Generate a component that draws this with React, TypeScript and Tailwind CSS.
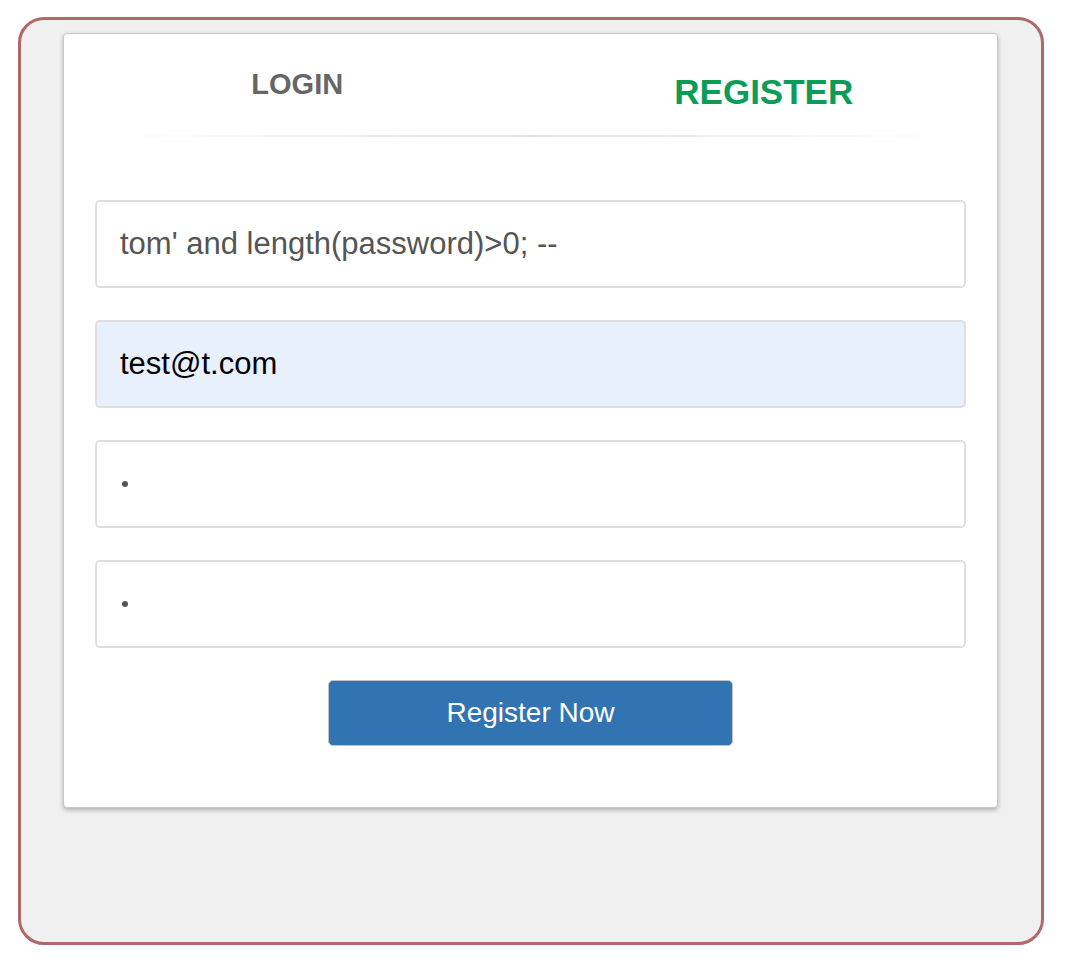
const font = { fontFamily: '"Liberation Sans", Arial, sans-serif' };

function Field({ children, filled }: { children: React.ReactNode; filled?: boolean }) {
  return (
    <div
      className={`flex h-[88px] items-center rounded-[5px] border-2 border-[#dedede] pl-[23px] ${
        filled ? "bg-[#e8f0fe]" : "bg-white"
      }`}
    >
      {children}
    </div>
  );
}

function Dot() {
  return <span className="ml-[2px] block h-[6px] w-[6px] rounded-full bg-[#555]" />;
}

export default function App() {
  return (
    <div className="min-h-[964px] bg-white pl-[18px] pt-[17px]" style={font}>
      <div className="h-[928px] w-[1026px] rounded-[26px] border-[3px] border-[#b06868] bg-[#f0f0f0] pl-[42px] pt-[13px]">
        <div className="w-[935px] rounded-[4px] border border-[#c8c8c8] bg-white pb-[61px] shadow-[0_2px_4px_rgba(0,0,0,0.28)]">
          <div className="grid h-[101px] grid-cols-2">
            <div className="flex justify-center pt-[36px]">
              <span className="text-[29px] font-bold leading-none text-[#666]">LOGIN</span>
            </div>
            <div className="flex justify-center pt-[40px]">
              <span className="text-[35px] font-bold leading-none text-[#0b9d58]">REGISTER</span>
            </div>
          </div>
          <div className="mx-[52px] h-[2px] bg-gradient-to-r from-transparent via-[#e2e2e2] to-transparent" />

          <div className="mt-[63px] flex flex-col gap-[32px] px-[31px]">
            <Field>
              <span className="text-[31px] text-[#555]">tom' and length(password)&gt;0; --</span>
            </Field>
            <Field filled>
              <span className="text-[31px] text-black">test@t.com</span>
            </Field>
            <Field>
              <Dot />
            </Field>
            <Field>
              <Dot />
            </Field>
          </div>

          <div className="mt-[32px] flex justify-center">
            <button
              type="button"
              className="h-[66px] w-[405px] rounded-[5px] border border-[#c4c4c4] bg-[#3273b1] text-[28px] text-white"
            >
              Register Now
            </button>
          </div>
        </div>
      </div>
    </div>
  );
}
